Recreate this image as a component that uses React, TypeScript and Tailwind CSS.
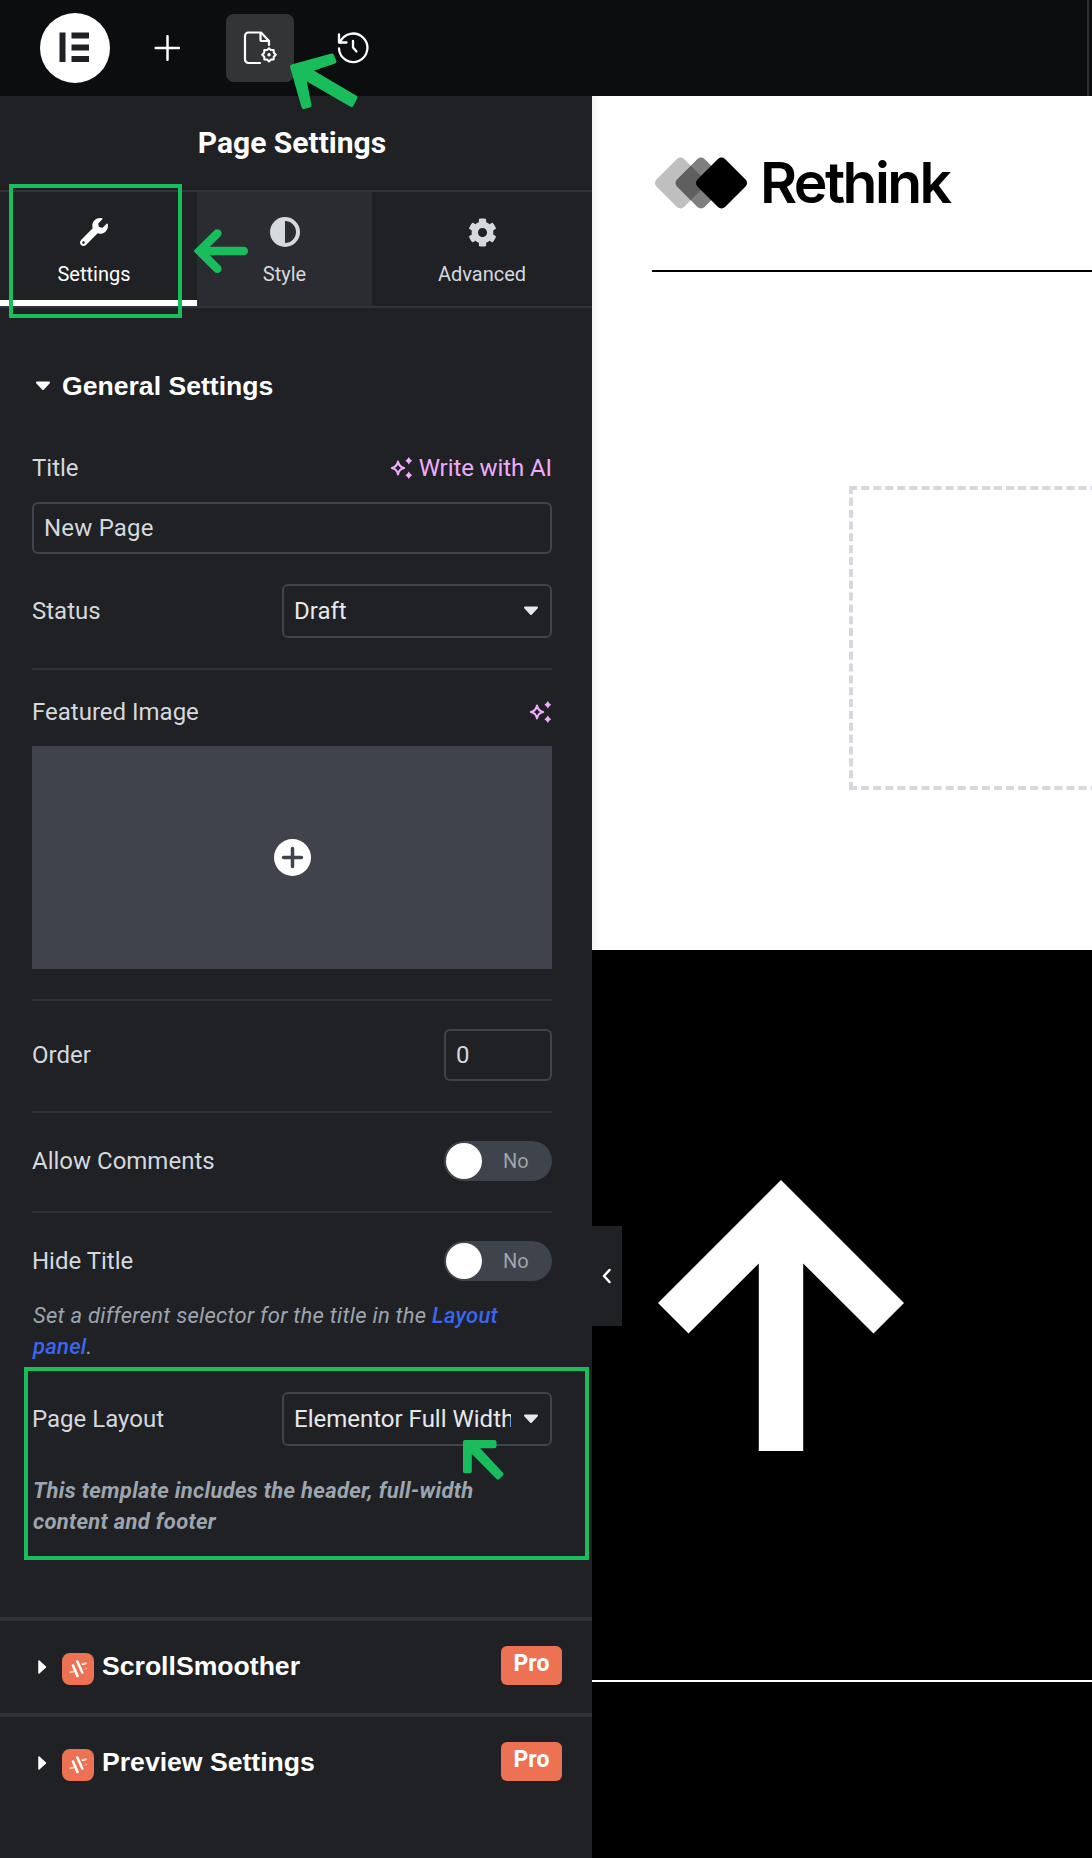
import type { ReactNode } from "react";
import { FaCog, FaWrench } from "react-icons/fa";

type TTab = {
  label: string;
  icon: ReactNode;
  className: string;
};

const tabs: TTab[] = [
  {
    label: "Settings",
    icon: <FaWrench size={28} />,
    className: "w-[197px] pr-[9px] text-white border-b-[6px] border-white",
  },
  {
    label: "Style",
    icon: <ContrastIcon />,
    className: "w-[175px] bg-[#2a2c31] text-[#d5d8dc] pb-[6px]",
  },
  {
    label: "Advanced",
    icon: <FaCog size={29} />,
    className: "w-[220px] text-[#d5d8dc] pb-[6px]",
  },
];

function ContrastIcon() {
  return (
    <svg width="30" height="30" viewBox="0 0 30 30">
      <circle cx="15" cy="15" r="13" fill="none" stroke="currentColor" strokeWidth="4" />
      <path d="M15 1a14 14 0 0 0 0 28z" fill="currentColor" />
    </svg>
  );
}

function PageGearIcon() {
  return (
    <svg width="34" height="34" viewBox="0 0 34 34" fill="none" stroke="#fff" strokeWidth="2.200" strokeLinecap="round" strokeLinejoin="round">
      <path d="M17 32H5.500A3.500 3.500 0 0 1 2 28.500V5A3.500 3.500 0 0 1 5.500 1.500H18L26 10V14" />
      <path d="M17.500 2V8.500A1.500 1.500 0 0 0 19 10H26" />
      <path d="M26 17.200l2 1.900 2.700-.1.100 2.700 2 2-2 2-.1 2.700-2.700.1-2 2-2-2-2.700-.1-.1-2.700-2-2 2-2 .1-2.700 2.700.1z" strokeWidth="2" />
      <circle cx="26" cy="23.700" r="1.700" fill="#fff" stroke="none" />
    </svg>
  );
}

function HistoryIcon() {
  return (
    <svg width="34" height="34" viewBox="0 0 34 34" fill="none" stroke="#fff" strokeWidth="2.300" strokeLinecap="round" strokeLinejoin="round">
      <path d="M3 17.500A14.200 14.200 0 1 0 4 11.500" />
      <path d="M3 3.500V11.500H10.500" />
      <path d="M17 10V16.500L20.500 20.500" />
    </svg>
  );
}

function SparkleIcon() {
  return (
    <svg width="24" height="22" viewBox="0 0 24 22" className="text-[#f0abfc]">
      <path
        d="M9 4.500C9.700 8.100 11 10.200 15.200 11 11 11.800 9.700 13.900 9 17.500 8.300 13.900 7 11.800 2.800 11 7 10.200 8.300 8.100 9 4.500z"
        fill="none"
        stroke="currentColor"
        strokeWidth="2"
        strokeLinejoin="round"
      />
      <path d="M19.800 0l1.500 2.200 1.900 1.600-1.900 1.500-1.500 2.200-1.500-2.200-1.900-1.500 1.900-1.600zM19.800 14.500l1.500 2.200 1.900 1.600-1.900 1.500-1.500 2.200-1.500-2.200-1.900-1.500 1.900-1.600z" fill="currentColor" />
    </svg>
  );
}

function CaretDown({ className }: { className?: string }) {
  return (
    <svg width="16" height="10" viewBox="0 0 16 10" className={className}>
      <path d="M2 1.500H14L8 8z" fill="currentColor" stroke="currentColor" strokeWidth="2" strokeLinejoin="round" />
    </svg>
  );
}

function Divider() {
  return <hr className="mt-[30px] h-0.5 border-0 bg-[#2e3034]" />;
}

function Select({ value }: { value: string }) {
  return (
    <div className="flex h-[54px] w-[270px] items-center justify-between rounded-md border-2 border-[#3f444b] pr-[11px] pl-2.5 text-[#e6e9ec]">
      <span className="w-[217px] overflow-hidden whitespace-nowrap">{value}</span>
      <CaretDown />
    </div>
  );
}

function Toggle() {
  return (
    <div className="flex h-10 w-[108px] items-center rounded-full bg-[#3f434b] pl-0.5">
      <span className="h-9 w-9 rounded-full bg-white" />
      <span className="ml-[21px] text-[20px] text-[#9da5ae]">No</span>
    </div>
  );
}

function ProSection({ title }: { title: string }) {
  return (
    <section className="flex h-24 items-center border-t-4 border-[#303237] pr-[30px] pl-[37px] text-white">
      <svg width="10" height="16" viewBox="0 0 10 16">
        <path d="M2 2V14L8.500 8z" fill="currentColor" stroke="currentColor" strokeWidth="1.500" strokeLinejoin="round" />
      </svg>
      <svg width="32" height="32" viewBox="0 0 32 32" className="mt-1 ml-[15px]">
        <rect width="32" height="32" rx="8" fill="#ed7254" />
        <g stroke="#fff" strokeWidth="2.600" strokeLinecap="round">
          <path d="M11 12.500L15.500 23" />
          <path d="M15.300 8.500L20.300 19.500" />
          <path d="M20.500 11.200L23.800 10.300" strokeWidth="2" opacity=".85" />
          <path d="M8.300 19.300L11.500 18.500" strokeWidth="2" opacity=".6" />
          <path d="M24 15.500h.1" strokeWidth="2" opacity=".4" />
        </g>
      </svg>
      <h3 className="mb-px ml-[8px] flex-1 font-['Liberation_Sans',Arial,sans-serif] text-[26.6px] font-bold">
        {title}
      </h3>
      <span className="mb-[3px] h-[39px] w-[61px] rounded-md bg-[#ed7254] text-center text-[23px] leading-[36px] font-bold">
        Pro
      </span>
    </section>
  );
}

function TopBar() {
  return (
    <header className="flex h-24 items-center bg-[#0c0d0e] pl-10">
      <svg width="70" height="70" viewBox="0 0 70 70">
        <circle cx="35" cy="35" r="35" fill="#fff" />
        <path d="M19.500 19.500h6v29.500h-6zM31.500 19.500H49v6H31.500zM31.500 31.500H49v6H31.500zM31.500 43H49v6H31.500z" fill="#1f2124" />
      </svg>
      <svg width="26" height="26" viewBox="0 0 26 26" className="ml-[44px]" stroke="#fff" strokeWidth="2.500" strokeLinecap="round">
        <path d="M13.500 1.200V24.800M1.700 13H25" />
      </svg>
      <div className="ml-[46px] flex h-[68px] w-[68px] items-center justify-center rounded-lg bg-[#333436]">
        <PageGearIcon />
      </div>
      <div className="ml-[42px]">
        <HistoryIcon />
      </div>
      <div className="mr-[3px] ml-auto h-full w-0.5 bg-[#2c2e31]" />
    </header>
  );
}

function SettingsPanel() {
  return (
    <aside className="relative w-[592px] shrink-0 bg-[#1f2124]">
      <h1 className="flex h-[94px] items-center justify-center pr-2 pb-0.5 text-[30px] font-bold text-white">
        Page Settings
      </h1>
      <nav className="flex h-[118px] border-y-2 border-[#313338]">
        {tabs.map((tab) => (
          <div key={tab.label} className={`flex flex-col items-center pt-[25px] ${tab.className}`}>
            <span className="flex h-[30px] items-center">{tab.icon}</span>
            <span className="mt-[14px] text-[20px] leading-[26px]">{tab.label}</span>
          </div>
        ))}
      </nav>

      <div className="flex flex-col px-8 pt-12 pr-10 text-[24px] text-[#d5d8dc]">
        <div className="flex h-[60px] items-center text-white">
          <CaretDown className="ml-[3px]" />
          <h2 className="mt-0.5 ml-[11px] font-['Liberation_Sans',Arial,sans-serif] text-[26.6px] font-bold">
            General Settings
          </h2>
        </div>

        <div className="mt-[34px] flex h-9 items-center justify-between">
          <span>Title</span>
          <span className="flex items-center gap-1.5 tracking-[-0.1px] text-[#f0abfc]">
            <SparkleIcon />
            Write with AI
          </span>
        </div>
        <div className="mt-4 flex h-[52px] items-center rounded-md border-2 border-[#3f444b] pl-2.5 tracking-[0.2px]">
          New Page
        </div>
        <div className="mt-[30px] flex items-center justify-between">
          <span>Status</span>
          <Select value="Draft" />
        </div>
        <Divider />

        <div className="mt-6 flex h-9 items-center justify-between">
          <span>Featured Image</span>
          <SparkleIcon />
        </div>
        <div className="mt-4 flex h-[223px] items-center justify-center bg-[#40434b]">
          <svg width="37" height="37" viewBox="0 0 37 37">
            <circle cx="18.500" cy="18.500" r="18.500" fill="#fff" />
            <path d="M18.500 9.500V27.500M9.500 18.500H27.500" stroke="#40434b" strokeWidth="3.500" strokeLinecap="round" />
          </svg>
        </div>
        <Divider />

        <div className="mt-7 flex items-center justify-between">
          <span>Order</span>
          <div className="flex h-[52px] w-[108px] items-center rounded-md border-2 border-[#3f444b] pl-2.5">
            0
          </div>
        </div>
        <Divider />
        <div className="mt-7 flex items-center justify-between">
          <span>Allow Comments</span>
          <Toggle />
        </div>
        <Divider />
        <div className="mt-7 flex items-center justify-between">
          <span>Hide Title</span>
          <Toggle />
        </div>
        <p className="mt-[19px] pl-px text-[22px] leading-[31px] tracking-[0.26px] text-[#9da5ae] italic">
          Set a different selector for the title in the{" "}
          <a className="font-medium text-[#3b66f0]">
            Layout
            <br />
            panel
          </a>
          .
        </p>

        <div className="mt-[30px] flex items-center justify-between">
          <span>Page Layout</span>
          <Select value="Elementor Full Width" />
        </div>
        <p className="mt-[29px] mb-20 pl-px text-[22px] leading-[31px] font-bold tracking-[0.3px] text-[#9da5ae] italic">
          This template includes the header, full-width
          <br />
          content and footer
        </p>
      </div>

      <ProSection title="ScrollSmoother" />
      <ProSection title="Preview Settings" />

      {/* collapse handle hanging over the preview */}
      <div className="absolute top-[1130px] left-full z-10 flex h-[100px] w-[30px] items-center justify-center bg-[#1f2124]">
        <svg width="12" height="16" viewBox="0 0 12 16" fill="none" stroke="#fff" strokeWidth="2.500" strokeLinecap="round" strokeLinejoin="round">
          <path d="M8.500 2L3 8L8.500 14" />
        </svg>
      </div>
    </aside>
  );
}

function Preview() {
  return (
    <main className="flex flex-1 flex-col overflow-hidden bg-black">
      <section className="h-[854px] bg-white pl-[60px] shadow-[inset_10px_0_10px_-8px_rgba(0,0,0,0.08)]">
        <div className="flex h-[176px] items-center border-b-2 border-black">
          <svg width="96" height="54" viewBox="0 0 96 54">
            <rect x="9" y="7.500" width="39" height="39" rx="5" transform="rotate(45 28.500 27)" fill="#bfbfbf" />
            <rect x="29.500" y="7.500" width="39" height="39" rx="5" transform="rotate(45 49 27)" fill="#000" fillOpacity=".5" />
            <rect x="50" y="7.500" width="39" height="39" rx="5" transform="rotate(45 69.500 27)" fill="#000" />
          </svg>
          <span className="ml-[12px] font-['Inter',sans-serif] text-[57px] leading-[60px] font-semibold tracking-[-2.6px] text-black">
            Rethink
          </span>
        </div>
        <div className="mt-[214px] ml-[197px] h-[304px] w-[600px] border-4 border-dashed border-[#d5d8dc]" />
      </section>
      <section className="h-[732px] border-b-2 border-white pt-[230px] pl-[65px]">
        <svg width="248" height="272" viewBox="0 0 248 272">
          <path d="M124 0L247 123L216.500 153.500L146.200 83.500V271H101.800V83.500L31.500 153.500L1 123z" fill="#fff" />
        </svg>
      </section>
    </main>
  );
}

// Green callouts drawn over the editor
function Callouts() {
  return (
    <>
      <div className="absolute top-[184px] left-[9px] h-[134px] w-[173px] border-4 border-[#1abd5c]" />
      <div className="absolute top-[1367px] left-[24px] h-[193px] w-[565px] border-4 border-[#1abd5c]" />
      <svg className="absolute top-[50px] left-[286px]" width="76" height="64" viewBox="286 50 76 64">
        <path d="M292 66.500L332 55.500L334.500 61.500L309 70L355.500 97.500L351.500 105L304 77.500L309.500 105.500L303.500 107z" fill="#1abd5c" stroke="#1abd5c" strokeWidth="4" strokeLinejoin="round" />
      </svg>
      <svg className="absolute top-[226px] left-[192px]" width="60" height="50" viewBox="192 226 60 50" fill="none" stroke="#1abd5c" strokeWidth="8.500" strokeLinecap="round">
        <path d="M217.300 233.500L199.500 251L217.300 268.700" strokeLinejoin="miter" />
        <path d="M202 251H243.800" />
      </svg>
      <svg className="absolute top-[1436px] left-[460px]" width="48" height="46" viewBox="460 1436 48 46">
        <path d="M465 1442H494.500V1446.200H475.500L501.500 1474L498 1477.500L469.800 1449V1471.200H465z" fill="#1abd5c" stroke="#1abd5c" strokeWidth="4" strokeLinejoin="round" />
      </svg>
    </>
  );
}

export default function App() {
  return (
    <div className="relative flex h-[1858px] w-[1092px] flex-col overflow-hidden font-['Roboto',sans-serif]">
      <TopBar />
      <div className="flex flex-1">
        <SettingsPanel />
        <Preview />
      </div>
      <Callouts />
    </div>
  );
}
